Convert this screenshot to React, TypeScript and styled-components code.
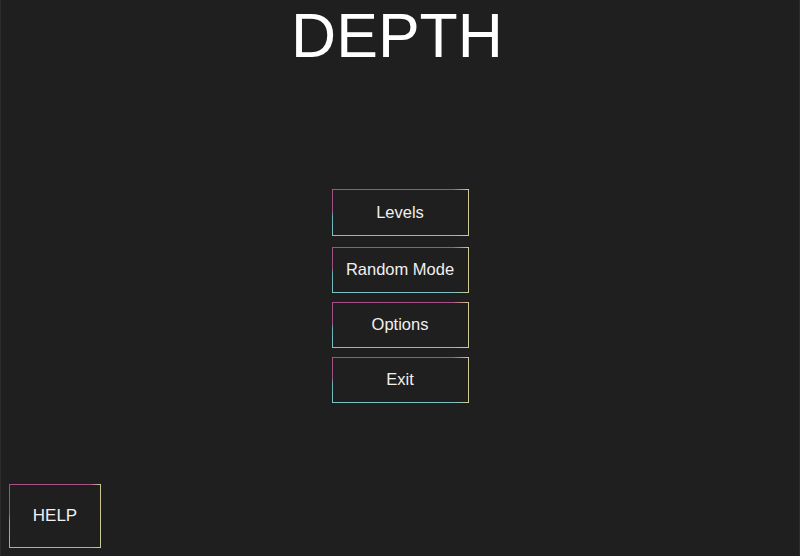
import styled, { createGlobalStyle } from "styled-components";

const GlobalStyle = createGlobalStyle`
  html, body {
    margin: 0;
    padding: 0;
    background: #1f1f1f;
  }
  * {
    box-sizing: border-box;
  }
`

const Screen = styled.div`
  width: 800px;
  height: 556px;
  display: flex;
  flex-direction: column;
  align-items: center;
  background: #1f1f1f;
  border-left: 1px solid #2c2c2c;
  border-right: 1px solid #2c2c2c;
  font-family: "Liberation Sans", Arial, sans-serif;
  color: #f2f2f2;
  overflow: hidden;
`

const Title = styled.h1`
  margin: 4px 0 0 0;
  padding-right: 6px;
  font-size: 62.5px;
  font-weight: 400;
  line-height: 1;
  color: #ffffff;
`

const Menu = styled.nav`
  display: flex;
  flex-direction: column;
  gap: 9px;
  margin-top: 122px;
`

const GlowButton = styled.button<{ $w: number; $h: number }>`
  width: ${(p) => p.$w}px;
  height: ${(p) => p.$h}px;
  display: flex;
  align-items: center;
  justify-content: center;
  padding: 0;
  border: 1.5px solid transparent;
  background:
    linear-gradient(#1f1f1f, #1f1f1f) padding-box,
    linear-gradient(to right, rgba(200, 198, 140, 0) 88%, #cfcc95 100%) border-box,
    linear-gradient(to bottom, #a85085 0%, #985286 45%, #6cb0b8 58%, #7cc2c4 100%) border-box;
  font-family: "Liberation Sans", Arial, sans-serif;
  font-size: 16.5px;
  color: #f0f0f0;
  cursor: pointer;
`

const MenuButton = styled(GlowButton)<{ $gap: number }>`
  margin-top: ${(p) => p.$gap}px;
`

const Footer = styled.div`
  align-self: stretch;
  margin-top: auto;
  padding: 0 0 8px 8px;
`

const HelpButton = styled(GlowButton)`
  font-size: 17px;
`

const items = ["Levels", "Random Mode", "Options", "Exit"]

export default function App() {
  return (
    <>
      <GlobalStyle />
      <Screen>
        <Title>DEPTH</Title>
        <Menu>
          {items.map((label, i) => (
            <MenuButton key={label} $w={137} $h={i === 0 ? 47 : 46} $gap={i === 1 ? 2 : 0}>
              {label}
            </MenuButton>
          ))}
        </Menu>
        <Footer>
          <HelpButton $w={92} $h={64}>HELP</HelpButton>
        </Footer>
      </Screen>
    </>
  )
}
